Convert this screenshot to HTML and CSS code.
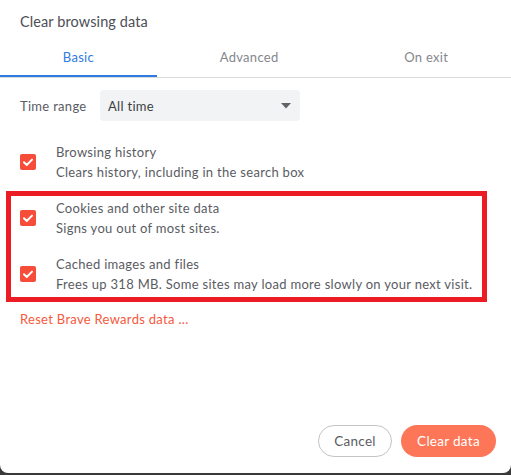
FILE: index.html
```html
<!DOCTYPE html>
<html>
<head>
<meta charset="utf-8">
<link rel="stylesheet" href="styles.css">
</head>
<body>
<div class="dialog">
  <div class="title">Clear browsing data</div>
  <div class="tabs">
    <div class="tab active">Basic</div>
    <div class="tab">Advanced</div>
    <div class="tab">On exit</div>
  </div>
  <div class="content">
    <div class="range-row">
      <span class="range-label">Time range</span>
      <div class="select">
        <span>All time</span>
        <svg class="arrow" width="10" height="6" viewBox="0 0 10 6"><path d="M0 0 L10 0 L5 5.5 Z" fill="#5f6368"/></svg>
      </div>
    </div>
    <div class="items">
      <div class="item">
        <span class="check"><svg width="16" height="16" viewBox="0 0 16 16"><path d="M4 8.2 L6.8 11 L12 5.6" fill="none" stroke="#fff" stroke-width="2" stroke-linecap="round" stroke-linejoin="round"/></svg></span>
        <div class="text">
          <div class="label">Browsing history</div>
          <div class="sub">Clears history, including in the search box</div>
        </div>
      </div>
      <div class="item">
        <span class="check"><svg width="16" height="16" viewBox="0 0 16 16"><path d="M4 8.2 L6.8 11 L12 5.6" fill="none" stroke="#fff" stroke-width="2" stroke-linecap="round" stroke-linejoin="round"/></svg></span>
        <div class="text">
          <div class="label">Cookies and other site data</div>
          <div class="sub">Signs you out of most sites.</div>
        </div>
      </div>
      <div class="item">
        <span class="check"><svg width="16" height="16" viewBox="0 0 16 16"><path d="M4 8.2 L6.8 11 L12 5.6" fill="none" stroke="#fff" stroke-width="2" stroke-linecap="round" stroke-linejoin="round"/></svg></span>
        <div class="text">
          <div class="label">Cached images and files</div>
          <div class="sub">Frees up 318 MB. Some sites may load more slowly on your next visit.</div>
        </div>
      </div>
    </div>
    <div class="reset">Reset Brave Rewards data ...</div>
  </div>
  <div class="footer">
    <button class="btn cancel">Cancel</button>
    <button class="btn primary">Clear data</button>
  </div>
  <div class="highlight"></div>
</div>
</body>
</html>
```

FILE: styles.css
```css
html, body {
  margin: 0;
  padding: 0;
}
body {
  background: #3a3a3a;
  width: 511px;
  height: 475px;
  font-family: "Lato", "Noto Sans", sans-serif;
  color: #5a5c63;
  letter-spacing: 0.3px;
}
.dialog {
  position: relative;
  width: 511px;
  height: 473px;
  background: #fff;
  border-radius: 0 0 8px 8px;
  display: flex;
  flex-direction: column;
}
.title {
  padding: 12px 20px 8px;
  font-size: 14.5px;
  line-height: 20px;
  color: #4d4f56;
  letter-spacing: 0.1px;
}
.tabs {
  display: flex;
  border-bottom: 1px solid #dadce0;
}
.tab {
  flex: 1 1 auto;
  text-align: center;
  font-size: 13px;
  line-height: 18px;
  padding: 8px 0 9px;
  border-bottom: 2px solid transparent;
  color: #85878d;
}
.tab.active {
  color: #2f7be0;
  border-bottom-color: #2f7be0;
}
.content {
  padding: 0 20px;
}
.range-row {
  display: flex;
  align-items: center;
  margin-top: 12px;
  height: 31px;
}
.range-label {
  font-size: 13px;
  width: 80px;
  color: #5a5c63;
}
.select {
  width: 200px;
  height: 31px;
  box-sizing: border-box;
  background: #f1f3f4;
  border-radius: 4px;
  display: flex;
  align-items: center;
  justify-content: space-between;
  padding: 0 9px 0 8px;
  font-size: 13px;
  color: #3c3e44;
}
.arrow {
  display: block;
}
.items {
  margin-top: 21px;
  display: flex;
  flex-direction: column;
  gap: 16px;
}
.item {
  display: flex;
  align-items: center;
}
.check {
  width: 16px;
  height: 16px;
  border-radius: 2px;
  background: #f64d3b;
  margin-right: 20px;
  display: flex;
}
.label, .sub {
  font-size: 13px;
  line-height: 20px;
  color: #5a5c63;
}
.reset {
  margin-top: 15px;
  font-size: 13px;
  line-height: 20px;
  color: #f5593d;
}
.footer {
  margin-top: auto;
  padding: 0 15px 16px;
  display: flex;
  justify-content: flex-end;
  gap: 9px;
}
.btn {
  font-family: inherit;
  font-size: 13.5px;
  letter-spacing: 0.3px;
  height: 32px;
  border-radius: 16px;
  padding: 0;
  cursor: pointer;
}
.cancel {
  width: 74px;
  background: #fff;
  border: 1px solid #c4c4c4;
  color: #5a5c63;
}
.primary {
  width: 95px;
  background: #fd7657;
  border: none;
  color: #fff;
}
.highlight {
  position: absolute;
  left: 6px;
  top: 191px;
  width: 481px;
  height: 111px;
  box-sizing: border-box;
  border: 5px solid #ec1c24;
}
```
